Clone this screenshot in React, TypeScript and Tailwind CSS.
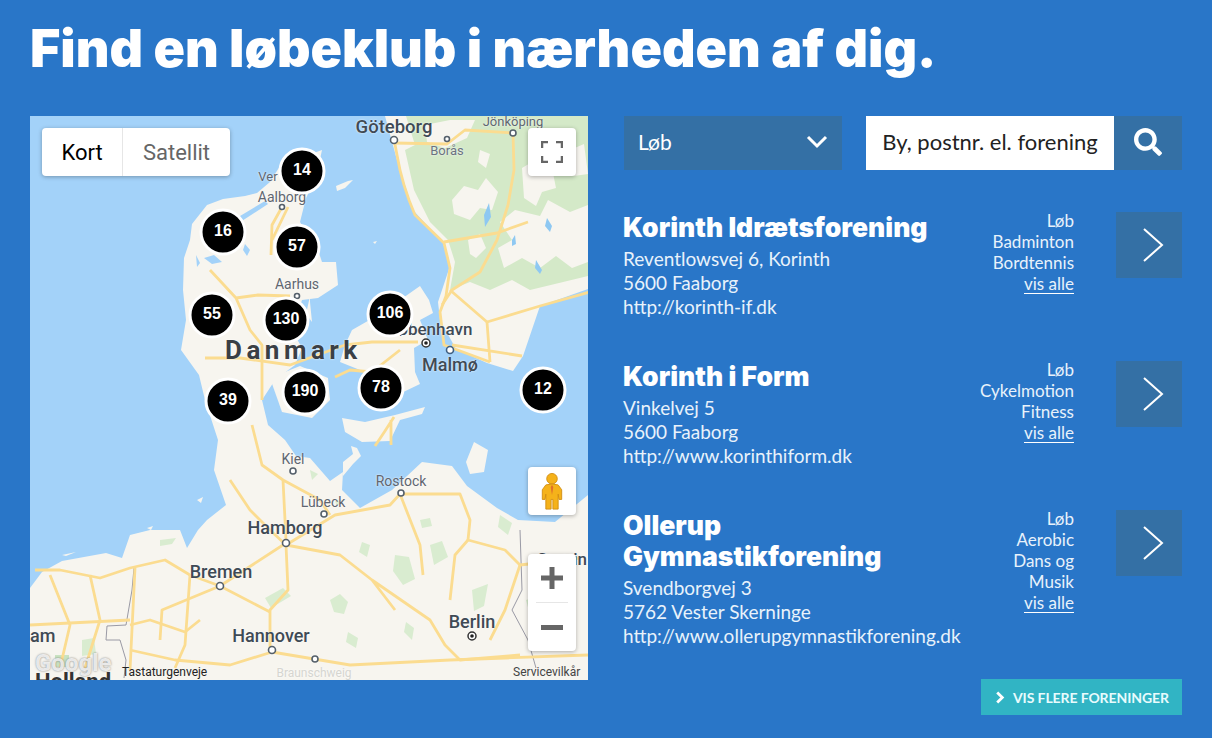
import { FaSearch } from 'react-icons/fa';

const FONT = "font-['Lato','Open_Sans',sans-serif]";

const CLUBS = [
  {
    name: 'Korinth Idrætsforening',
    lines: ['Reventlowsvej 6, Korinth', '5600 Faaborg', 'http://korinth-if.dk'],
    tags: ['Løb', 'Badminton', 'Bordtennis'],
  },
  {
    name: 'Korinth i Form',
    lines: ['Vinkelvej 5', '5600 Faaborg', 'http://www.korinthiform.dk'],
    tags: ['Løb', 'Cykelmotion', 'Fitness'],
  },
  {
    name: 'Ollerup Gymnastikforening',
    lines: ['Svendborgvej 3', '5762 Vester Skerninge', 'http://www.ollerupgymnastikforening.dk'],
    tags: ['Løb', 'Aerobic', 'Dans og Musik'],
  },
];

const CLUSTERS = [
  { n: 14, x: 302, y: 171 },
  { n: 16, x: 223, y: 232 },
  { n: 57, x: 297, y: 247 },
  { n: 55, x: 212, y: 315 },
  { n: 130, x: 286, y: 320 },
  { n: 106, x: 390, y: 314 },
  { n: 39, x: 228, y: 401 },
  { n: 190, x: 305, y: 392 },
  { n: 78, x: 381, y: 388 },
  { n: 12, x: 543, y: 390 },
];

const PLACES = [
  { t: 'Göteborg', x: 394, y: 127, s: 18.5, c: '#3f4a55', w: 500 },
  { t: 'Borås', x: 447, y: 150, s: 13, c: '#6b7280', w: 400 },
  { t: 'Jönköping', x: 513, y: 121, s: 13, c: '#5f6670', w: 400 },
  { t: 'Ver', x: 268, y: 176, s: 13, c: '#5f6670', w: 400 },
  { t: 'Aalborg', x: 282, y: 197, s: 14, c: '#5f6670', w: 400 },
  { t: 'Aarhus', x: 297, y: 284, s: 14, c: '#5f6670', w: 400 },
  { t: 'København', x: 430, y: 329, s: 17, c: '#3f4a55', w: 500 },
  { t: 'Malmø', x: 450, y: 365, s: 18, c: '#3f4a55', w: 500 },
  { t: 'Kiel', x: 293, y: 459, s: 14, c: '#5f6670', w: 400 },
  { t: 'Rostock', x: 401, y: 481, s: 14, c: '#5f6670', w: 400 },
  { t: 'Lübeck', x: 323, y: 502, s: 14, c: '#5f6670', w: 400 },
  { t: 'Hamborg', x: 285, y: 528, s: 18, c: '#3f4a55', w: 500 },
  { t: 'Bremen', x: 221, y: 572, s: 18, c: '#3f4a55', w: 500 },
  { t: 'Hannover', x: 271, y: 636, s: 18, c: '#3f4a55', w: 500 },
  { t: 'Berlin', x: 472, y: 622, s: 18, c: '#3f4a55', w: 500 },
  { t: 'Stettin', x: 562, y: 559, s: 17, c: '#3f4a55', w: 500 },
  { t: 'Braunschweig', x: 314, y: 673, s: 12, c: '#d5d5d0', w: 400 },
];

const DOTS = [
  [394, 140, 3.5], [447, 139, 2.5], [513, 133, 3], [282, 207, 2.5], [297, 296, 2.5],
  [293, 471, 3], [401, 493, 3], [324, 514, 3], [286, 543, 3.5], [220, 586, 3.5],
  [272, 650, 3.5], [315, 659, 3],
];

const ROADS = [
  'M394 139 L397 155 Q402 185 415 215 L444 243 L450 268 L446 296 L440 312 L444 345 L490 362',
  'M394 143 L447 144 L465 130 L513 133 L514 170 L508 205 L497 240 L480 272 L452 290 L442 305',
  'M444 242 L497 233 L528 222',
  'M450 290 L487 322 L540 306 L590 292',
  'M487 322 L490 362 M452 345 L522 356',
  'M282 207 L272 225 L271 255 M288 207 L272 240',
  'M210 270 L236 298 L258 295 L290 296 M236 298 L250 330 L262 345 L262 400',
  'M205 358 L240 358 L290 365 L345 345 L372 342 L418 342',
  'M335 377 L350 370 L372 372 L400 350',
  'M375 446 L385 431 L394 417 M391 420 L391 445',
  'M252 425 L262 465 L283 480 L286 540 M283 480 L320 500 L330 515',
  'M230 480 L250 510 L270 530 L286 545',
  'M286 545 L335 515 L390 505 L400 494 L460 494 L470 520 L468 540 L505 550 L520 565 L580 558',
  'M286 545 L340 555 L372 580 L430 620 L445 645 L460 660 L520 655 M372 580 L395 610',
  'M400 494 L420 545 L423 575 M468 540 L455 555 L450 600 M520 565 L505 610 L490 640',
  'M286 543 L220 586 L162 610 L160 640 M286 545 L288 590 L270 610 L270 650',
  'M220 586 L190 575 L165 560 L130 568 L100 578 L60 570 L35 570',
  'M190 575 L185 645 L175 668 M220 586 L270 612 M130 620 L30 625',
  'M90 575 L100 620 L85 668 M50 575 L70 625 L60 668 M135 568 L130 670',
  'M130 650 L175 660 L230 665 L272 652 L350 665 L450 660 L588 655',
  'M130 625 L150 620 L185 632 L200 620',
];

// smaa groenne pletter i Tyskland og Holland
const GREENS = [
  'M330 600 l10 -6 l8 8 l-4 12 l-10 -2 z', 'M395 555 l14 2 l6 22 l-12 6 l-10 -14 z', 'M430 545 l12 -4 l6 16 l-14 8 z',
  'M265 598 l18 -10 l8 8 l-20 12 z', 'M362 542 l8 3 l-3 12 l-8 -5 z', 'M406 622 l8 6 l-2 12 l-8 -8 z',
  'M472 590 l16 -6 l-4 22 l-10 5 z', 'M526 600 l12 -4 l10 14 l-16 12 z', 'M420 520 l10 -2 l2 8 l-10 2 z',
  'M82 640 l12 -2 l2 16 l-14 2 z', 'M348 632 l10 6 l-2 10 l-10 -6 z', 'M500 515 l12 8 l-4 12 l-10 -8 z',
  'M160 540 l16 -2 l-4 6 l-12 2 z', 'M310 470 l8 4 l-6 6 z', 'M345 500 l-8 6 l-2 -5 z',
];

function Pegman() {
  return (
    <svg viewBox="0 0 24 42" className="h-[37px] w-[22px]">
      <circle cx="12" cy="6.5" r="6" fill="#f5b21a" stroke="#d08c10" strokeWidth="1" />
      <path
        d="M5 13.5 Q12 11.5 19 13.5 L23 19 V30 H20 L19 24 V41 H13 V30 H11 V41 H5 V24 L4 30 H1 V19 Z"
        fill="#f5b21a"
        stroke="#d08c10"
        strokeWidth="1"
      />
      <path d="M12 13.5 L10.5 16 L12 25 L13.5 16 Z" fill="#e0702a" />
    </svg>
  );
}

function MapBase() {
  return (
    <svg viewBox="30 116 558 564" className="absolute inset-0 h-full w-full blur-[0.4px]">
      <rect x="30" y="116" width="558" height="564" fill="#a3d2f9" />
      {/* Jylland og Nordtyskland */}
      <path
        fill="#f7f5ef"
        d="M192 224 L207 205 L223 199 L245 196 L257 193 L270 182 L280 166 L300 158 L322 150 L316 178 L306 198 L300 222 L318 250 L322 262 L336 262 L338 285 L318 298 L302 300 L292 330 L302 348 L295 365 L275 380 L262 400 L268 425 L285 440 L296 456 L310 458 L330 481 L343 472 L342 490 L360 508 L392 490 L422 462 L452 466 L467 486 L497 508 L518 520 L555 522 L588 495 L588 680 L30 680 L30 588 L42 572 L62 561 L106 553 L122 558 L130 535 L150 530 L180 530 L187 548 L198 530 L207 520 L226 505 L214 470 L218 440 L205 400 L199 375 L181 350 L186 320 L183 290 L184 258 L190 240 Z"
      />
      <path fill="#a3d2f9" d="M204 258 L214 255 L222 262 L212 264 Z M245 244 L250 250 L247 256 L243 250 Z M196 255 l4 8 l-3 4 Z M225 225 l40 -24 l3 3 l-40 26 Z" />
      {/* Sverige */}
      <path
        fill="#f7f5ef"
        d="M385 116 L397 160 L413 210 L443 243 L450 266 L438 302 L440 320 L456 349 L487 363 L513 371 L523 356 L540 306 L588 289 L588 116 Z"
      />
      <path
        fill="#d4e9c8"
        d="M406 116 L415 145 L405 150 L414 190 L430 222 L448 240 L455 262 L450 290 L470 282 L490 290 L512 280 L530 290 L588 276 L588 262 L572 268 L556 256 L540 268 L522 258 L504 268 L498 248 L512 240 L500 222 L515 210 L540 216 L548 200 L570 212 L588 205 L588 116 Z"
      />
      <path
        fill="#f7f5ef"
        d="M452 200 l12 -14 l14 4 l8 -12 l12 14 l-6 18 l-12 -2 l-10 12 l-16 -6 Z M522 168 l10 -6 l12 10 l8 -4 l4 20 l-14 4 l-6 14 l-12 -8 Z M468 240 l12 -6 l6 14 l-10 10 l-6 -4 Z M425 125 l25 -5 l25 0 l-8 18 l-22 10 l-18 -6 Z M570 150 l14 -6 l4 30 l-14 2 Z M480 150 l10 4 l-4 14 l-8 -6 Z"
      />
      <path fill="#8ec8f2" d="M484 215 l5 -12 l2 14 l-6 10 Z M547 218 l5 8 l-2 6 l-5 -6 Z M512 240 l3 -5 l1 9 l-4 2 Z M536 260 l6 10 l-2 4 l-5 -6 Z" />
      {/* Oeer */}
      <path fill="#f7f5ef" d="M336 186 l12 -5 l5 -1 l-8 8 l-8 3 Z M373 242 l4 -1 l-2 3 Z M310 296 l-4 18 l6 8 l-2 -20 Z" />
      <path
        fill="#f7f5ef"
        d="M352 330 L373 318 L400 300 L420 286 L429 300 L433 313 L420 320 L428 340 L414 348 L415 372 L420 384 L395 396 L360 370 L340 362 L345 345 Z"
      />
      <path fill="#f7f5ef" d="M270 378 L300 366 L328 378 L330 400 L312 418 L282 412 Z" />
      <path
        fill="#f7f5ef"
        d="M342 418 L365 422 L395 415 L425 407 L422 414 L400 420 L390 441 L362 442 L345 432 Z M343 462 l10 -8 l-2 -8 l6 2 l4 8 l-8 8 l-10 12 Z M466 462 l8 -20 l14 8 l-4 22 l-14 2 Z"
      />
      <path fill="#f7f5ef" d="M225 432 l8 -3 l2 6 l-8 3 Z M197 500 l6 -3 l-2 6 Z M147 528 l6 -2 l-2 4 Z M62 555 l14 -3 l-10 4 Z" />
      {GREENS.map((d, i) => (
        <path key={i} d={d} fill="#d9ecd0" />
      ))}
      <path fill="#c9e3c1" d="M55 655 h14 v12 h-14 Z" />
      {/* Graenser */}
      <path
        d="M134 568 L132 590 L126 625 L107 626 L106 640 L120 640 L126 660 L124 678 M520 530 L522 590 L512 610 L528 640 L536 668"
        fill="none"
        stroke="#9a9aa5"
        strokeWidth="1"
      />
      {ROADS.map((d, i) => (
        <path key={i} d={d} fill="none" stroke="#fbdc90" strokeWidth="2.8" strokeLinejoin="round" />
      ))}
      {DOTS.map(([x, y, r], i) => (
        <circle key={i} cx={x} cy={y} r={r} fill="#fff" stroke="#55606b" strokeWidth="1.6" />
      ))}
      <circle cx="426" cy="343" r="4" fill="#fff" stroke="#333" strokeWidth="1.5" />
      <circle cx="426" cy="343" r="1.8" fill="#222" />
      <circle cx="450" cy="350" r="3.5" fill="#fff" stroke="#3f5f80" strokeWidth="1.6" />
      <circle cx="472" cy="636" r="4" fill="#fff" stroke="#333" strokeWidth="1.5" />
      <circle cx="472" cy="636" r="1.8" fill="#222" />
    </svg>
  );
}

function MapPanel() {
  return (
    <div className="relative h-[564px] w-[558px] shrink-0 overflow-hidden font-['Roboto',sans-serif]">
      <MapBase />

      {PLACES.map((p) => (
        <span
          key={p.t}
          className="absolute -translate-x-1/2 -translate-y-1/2 whitespace-nowrap leading-none [text-shadow:0_0_2px_#fff]"
          style={{ left: p.x - 30, top: p.y - 116, fontSize: p.s, color: p.c, fontWeight: p.w }}
        >
          {p.t}
        </span>
      ))}
      <span className="absolute left-[195px] top-[221px] text-[26px] font-bold leading-none tracking-[4.5px] text-[#3a3f45] [text-shadow:0_0_2px_#fff]">
        Danmark
      </span>
      <span className="absolute left-0 top-[511px] text-[18px] font-medium leading-none text-[#3f4a55]">am</span>
      <span className="absolute left-[5px] top-[555px] text-[22px] font-bold leading-none text-[#333]">Holland</span>

      {CLUSTERS.map((c) => (
        <div
          key={c.n}
          className="absolute flex h-[47px] w-[47px] -translate-x-1/2 -translate-y-1/2 items-center justify-center rounded-full border-[3px] border-white bg-black font-['Liberation_Sans',sans-serif] text-[16px] font-bold text-white"
          style={{ left: c.x - 30, top: c.y - 116 }}
        >
          <span className="-mt-[3px]">{c.n}</span>
        </div>
      ))}

      <div className="absolute left-[12px] top-[12px] flex h-[48px] rounded-sm bg-white text-[22px] shadow-[0_1px_4px_rgba(0,0,0,0.3)]">
        <div className="flex w-[81px] items-center justify-center border-r border-[#e6e6e6] text-black">Kort</div>
        <div className="flex w-[107px] items-center justify-center text-[#666]">Satellit</div>
      </div>

      <div className="absolute left-[498px] top-[12px] flex h-[48px] w-[48px] items-center justify-center rounded-sm bg-white shadow-[0_1px_4px_rgba(0,0,0,0.3)]">
        <svg viewBox="0 0 22 22" className="h-[22px] w-[22px]" fill="none" stroke="#666" strokeWidth="2.5">
          <path d="M1 7 V1 H7 M15 1 H21 V7 M21 15 V21 H15 M7 21 H1 V15" />
        </svg>
      </div>

      <div className="absolute left-[498px] top-[351px] flex h-[48px] w-[48px] items-center justify-center rounded-sm bg-white shadow-[0_1px_4px_rgba(0,0,0,0.3)]">
        <Pegman />
      </div>

      <div className="absolute left-[498px] top-[438px] flex h-[97px] w-[48px] flex-col items-center rounded-sm bg-white shadow-[0_1px_4px_rgba(0,0,0,0.3)]">
        <div className="flex h-[48px] w-full items-center justify-center">
          <svg viewBox="0 0 22 22" className="h-[22px] w-[22px]" fill="#666">
            <path d="M8.5 0 h5 v8.5 h8.5 v5 h-8.5 v8.5 h-5 v-8.5 h-8.5 v-5 h8.5 z" />
          </svg>
        </div>
        <div className="h-px w-[32px] bg-[#e6e6e6]" />
        <div className="flex h-[48px] w-full items-center justify-center">
          <div className="h-[5px] w-[22px] bg-[#666]" />
        </div>
      </div>

      <span className="absolute left-[5px] top-[535px] text-[24px] font-bold leading-none text-white/80 [text-shadow:0_0_2px_rgba(90,90,90,0.8)]">
        Google
      </span>
      <span className="absolute left-[92px] top-[550px] text-[12px] leading-none text-[#222]">Tastaturgenveje</span>
      <span className="absolute left-[483px] top-[550px] text-[12px] leading-none text-[#444]">Servicevilkår</span>
    </div>
  );
}

function ClubRow({ club }: { club: (typeof CLUBS)[number] }) {
  return (
    <div className="flex items-start">
      <div className="w-[356px] shrink-0">
        <h3 className="max-w-[325px] font-['Inter',sans-serif] text-[26.5px] font-black leading-[31px] text-white">
          {club.name}
        </h3>
        <div className="mt-[4px] text-[19px] leading-[24px] text-[#e8f2fb]">
          {club.lines.map((l) => (
            <div key={l}>{l}</div>
          ))}
        </div>
      </div>
      <div className="-mt-[2px] w-[95px] shrink-0 text-right text-[17px] leading-[21px] text-[#e8f2fb]">
        {club.tags.map((t) => (
          <div key={t}>{t}</div>
        ))}
        <span className="inline-block border-b border-white leading-[18px]">vis alle</span>
      </div>
      <div className="ml-auto flex h-[66px] w-[66px] items-center justify-center bg-[#3470a5] pl-[8px]">
        <svg viewBox="0 0 22 36" className="h-[36px] w-[22px]" fill="none" stroke="#fff" strokeWidth="2">
          <path d="M2 2 L20 18 L2 34" />
        </svg>
      </div>
    </div>
  );
}

export default function App() {
  return (
    <div className={`h-[738px] w-[1212px] overflow-hidden bg-[#2976c8] px-[30px] ${FONT}`}>
      <h1 className="pt-[18px] font-['Inter',sans-serif] text-[52px] font-black leading-[62px] text-white">
        Find en løbeklub i nærheden af dig.
      </h1>

      <div className="mt-[36px] flex">
        <MapPanel />

        <div className="ml-[35px] flex w-[559px] flex-col">
          <div className="ml-px flex h-[54px]">
            <div className="flex w-[218px] items-center justify-between bg-[#3470a5] pb-[3px] pl-[14px] pr-[14px] text-[21px] text-white">
              Løb
              <svg viewBox="0 0 22 14" className="h-[14px] w-[22px]" fill="none" stroke="#fff" strokeWidth="3">
                <path d="M2 2 L11 11 L20 2" />
              </svg>
            </div>
            <div className="ml-[24px] flex w-[248px] items-center justify-center whitespace-nowrap bg-white pb-[3px] text-[22px] text-[#222]">
              By, postnr. el. forening
            </div>
            <div className="flex w-[68px] items-center justify-center bg-[#3470a5] pb-[2px]">
              <FaSearch className="h-[28px] w-[28px] text-white" />
            </div>
          </div>

          <div className="mt-[42px] flex flex-col gap-[42px]">
            {CLUBS.map((c) => (
              <ClubRow key={c.name} club={c} />
            ))}
          </div>

          <div className="ml-auto mt-[31px] flex h-[36px] w-[201px] items-center bg-[#31b4c4] pl-[14px] text-[14px] font-bold tracking-[-0.1px] text-[#e8fbfd]">
            <svg viewBox="0 0 10 14" className="mr-[8px] h-[13px] w-[10px]" fill="none" stroke="#fff" strokeWidth="3">
              <path d="M2 1.5 L7.5 7 L2 12.5" />
            </svg>
            VIS FLERE FORENINGER
          </div>
        </div>
      </div>
    </div>
  );
}
